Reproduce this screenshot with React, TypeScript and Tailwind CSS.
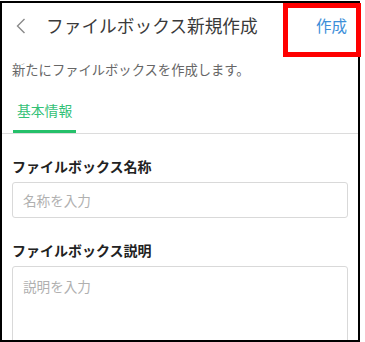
import React from "react";

export default function App() {
  const font = { fontFamily: '"Noto Sans CJK JP", "Noto Sans", sans-serif' };
  return (
    <div className="relative w-[365px] h-[342px] bg-white overflow-hidden" style={font}>
      <div className="mt-[1px] w-[360px] h-[341px] border-2 border-black overflow-hidden flex flex-col">
        {/* header */}
        <div className="h-[46px] shrink-0 flex items-center">
          <svg className="ml-[14px]" width="10" height="16" viewBox="0 0 10 16" fill="none">
            <polyline points="8.5,1 1.5,8 8.5,15" stroke="#8a8a8a" strokeWidth="1.4" />
          </svg>
          <span className="ml-[20px] text-[17.7px] leading-none text-[#3a3a3a]">
            ファイルボックス新規作成
          </span>
          <span className="ml-auto mr-[11px] text-[15.5px] leading-none text-[#3d8fd9]">作成</span>
        </div>
        {/* subtitle */}
        <div className="mt-[11px] pl-[10px] text-[13.3px] leading-[20px] text-[#666]">
          新たにファイルボックスを作成します。
        </div>
        {/* tabs */}
        <div className="mt-[20px] border-b border-[#dcdcdc] flex">
          <div className="ml-[11px] px-[4px] pb-[10px] border-b-[3px] border-[#25c06a] text-[13.8px] leading-[20px] text-[#33c176]">
            基本情報
          </div>
        </div>
        {/* form */}
        <div className="px-[10px] flex flex-col">
          <div className="mt-[22px] text-[14px] leading-[20px] font-bold text-[#222]">ファイルボックス名称</div>
          <div className="mt-[6px] h-[36px] border border-[#d9d9d9] rounded-[3px] flex items-center pl-[10px] text-[13.6px] text-[#b0b0b0]">
            名称を入力
          </div>
          <div className="mt-[22px] text-[14px] leading-[20px] font-bold text-[#222]">ファイルボックス説明</div>
          <div className="mt-[6px] h-[100px] border border-[#d9d9d9] rounded-[3px] pl-[10px] pt-[9px] text-[13.6px] leading-[20px] text-[#b0b0b0]">
            説明を入力
          </div>
        </div>
      </div>
      {/* red annotation */}
      <div className="absolute left-[283px] top-[3px] w-[78px] h-[54px] border-[5px] border-[#ff0000]" />
    </div>
  );
}
